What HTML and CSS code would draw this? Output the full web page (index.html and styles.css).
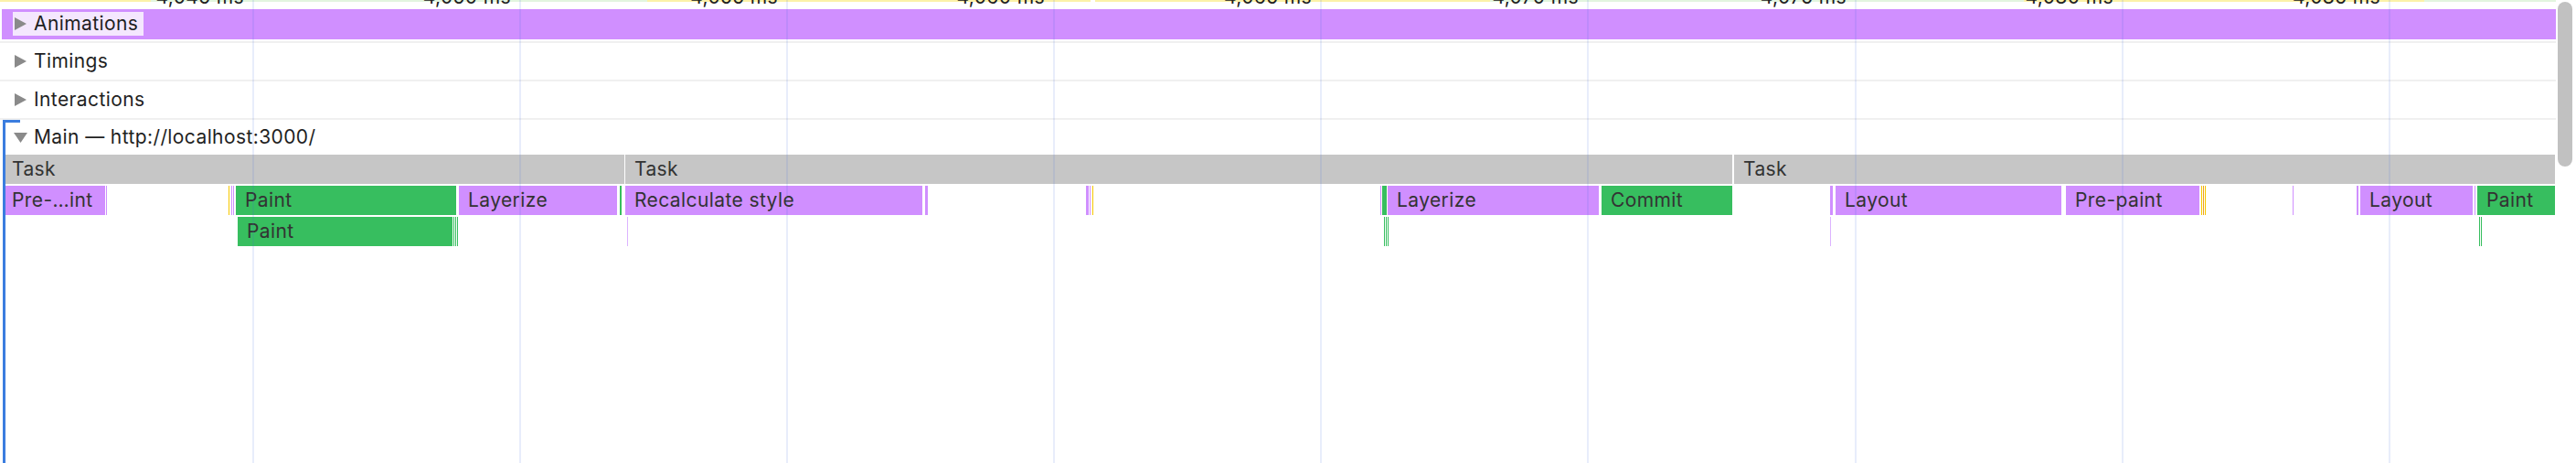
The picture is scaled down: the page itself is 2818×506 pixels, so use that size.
FILE: index.html
```html
<!DOCTYPE html>
<html lang="en">
<head>
<meta charset="utf-8">
<title>Performance timeline</title>
<link rel="stylesheet" href="styles.css">
</head>
<body>
<div class="timeline">
  <div class="frames">
    <div class="frame-line">
      <span class="fl fy" style="width:165px"></span>
      <span class="fl fg" style="width:543px"></span>
      <span class="fl fy" style="width:485px"></span>
      <span class="fl fw" style="width:5px"></span>
      <span class="fl fy" style="width:432px"></span>
      <span class="fl fg" style="width:584px"></span>
      <span class="fl fy" style="width:438px"></span>
      <span class="fl fg" style="width:144px"></span>
    </div>
    <span class="tick" style="left:267px">4,045 ms</span>
    <span class="tick" style="left:559px">4,050 ms</span>
    <span class="tick" style="left:851px">4,055 ms</span>
    <span class="tick" style="left:1143px">4,060 ms</span>
    <span class="tick" style="left:1435px">4,065 ms</span>
    <span class="tick" style="left:1727px">4,070 ms</span>
    <span class="tick" style="left:2020px">4,075 ms</span>
    <span class="tick" style="left:2312px">4,080 ms</span>
    <span class="tick" style="left:2604px">4,085 ms</span>
  </div>

  <div class="track anim">
    <div class="anim-bar">
      <div class="label anim-label">
        <svg class="tri-right" viewBox="0 0 13 14"><polygon points="0,0 13,7 0,14"/></svg>
        <span class="label-text">Animations</span>
      </div>
    </div>
  </div>
  <div class="sep"></div>

  <div class="track plain">
    <div class="label">
      <svg class="tri-right" viewBox="0 0 13 14"><polygon points="0,0 13,7 0,14"/></svg>
      <span class="label-text">Timings</span>
    </div>
  </div>
  <div class="sep"></div>

  <div class="track plain">
    <div class="label">
      <svg class="tri-right" viewBox="0 0 13 14"><polygon points="0,0 13,7 0,14"/></svg>
      <span class="label-text">Interactions</span>
    </div>
  </div>
  <div class="sep"></div>

  <div class="track main">
    <div class="bracket"></div>
    <div class="main-head">
      <svg class="tri-down" viewBox="0 0 15 11"><polygon points="0,0 15,0 7.5,11"/></svg>
      <span class="label-text">Main — http://localhost:3000/</span>
    </div>
    <div class="flame">
      <div class="frow">
        <div class="ev task" style="left:6px;width:677px"><span class="ev-text first">Task</span></div>
        <div class="ev task" style="left:684px;width:1211px"><span class="ev-text">Task</span></div>
        <div class="ev task" style="left:1897px;width:898px"><span class="ev-text">Task</span></div>
      </div>
      <div class="frow">
        <div class="ev p" style="left:6px;width:109px"><span class="ev-text first">Pre-…int</span></div>
        <div class="ev p" style="left:116px;width:1px"></div>
        <div class="ev y" style="left:250px;width:1px"></div>
        <div class="ev p" style="left:253px;width:1px"></div>
        <div class="ev p" style="left:255px;width:1px"></div>
        <div class="ev g" style="left:258px;width:241px"><span class="ev-text">Paint</span></div>
        <div class="ev p" style="left:502px;width:173px"><span class="ev-text">Layerize</span></div>
        <div class="ev g" style="left:678px;width:2px"></div>
        <div class="ev p" style="left:684px;width:325px"><span class="ev-text">Recalculate style</span></div>
        <div class="ev p" style="left:1012px;width:3px"></div>
        <div class="ev p" style="left:1188px;width:3px"></div>
        <div class="ev p" style="left:1192px;width:1px"></div>
        <div class="ev y" style="left:1195px;width:1px"></div>
        <div class="ev p" style="left:1510px;width:1px"></div>
        <div class="ev g" style="left:1512px;width:5px"></div>
        <div class="ev p" style="left:1518px;width:231px"><span class="ev-text">Layerize</span></div>
        <div class="ev g" style="left:1752px;width:143px"><span class="ev-text">Commit</span></div>
        <div class="ev p" style="left:2002px;width:3px"></div>
        <div class="ev p" style="left:2008px;width:247px"><span class="ev-text">Layout</span></div>
        <div class="ev p" style="left:2260px;width:146px"><span class="ev-text">Pre-paint</span></div>
        <div class="ev y" style="left:2408px;width:1px"></div>
        <div class="ev o" style="left:2410px;width:1px"></div>
        <div class="ev y" style="left:2412px;width:1px"></div>
        <div class="ev p" style="left:2508px;width:1px"></div>
        <div class="ev p" style="left:2578px;width:2px"></div>
        <div class="ev p" style="left:2582px;width:123px"><span class="ev-text">Layout</span></div>
        <div class="ev p" style="left:2707px;width:1px"></div>
        <div class="ev g" style="left:2710px;width:85px"><span class="ev-text">Paint</span></div>
      </div>
      <div class="frow">
        <div class="ev g" style="left:260px;width:235px"><span class="ev-text">Paint</span></div>
        <div class="ev g" style="left:496px;width:1px"></div>
        <div class="ev g" style="left:498px;width:1px"></div>
        <div class="ev g" style="left:500px;width:1px"></div>
        <div class="ev lp" style="left:686px;width:1px"></div>
        <div class="ev g" style="left:1514px;width:1px"></div>
        <div class="ev g" style="left:1516px;width:1px"></div>
        <div class="ev g" style="left:1518px;width:1px"></div>
        <div class="ev lp" style="left:2002px;width:1px"></div>
        <div class="ev g" style="left:2712px;width:1px"></div>
        <div class="ev g" style="left:2714px;width:1px"></div>
      </div>
    </div>
  </div>

  <div class="grid">
    <span class="gl" style="left:276px"></span>
    <span class="gl" style="left:568px"></span>
    <span class="gl" style="left:860px"></span>
    <span class="gl" style="left:1152px"></span>
    <span class="gl" style="left:1444px"></span>
    <span class="gl" style="left:1736px"></span>
    <span class="gl" style="left:2029px"></span>
    <span class="gl" style="left:2321px"></span>
    <span class="gl" style="left:2613px"></span>
  </div>

  <div class="scrollbar"></div>
</div>
</body>
</html>
```

FILE: styles.css
```css
* { box-sizing: border-box; }

html, body {
  margin: 0;
  padding: 0;
  background: #ffffff;
}

body {
  width: 2818px;
  height: 506px;
  overflow: hidden;
  font-family: Inter, "Liberation Sans", sans-serif;
  font-size: 21px;
  letter-spacing: 0.4px;
  color: #1f1f1f;
}

.timeline {
  position: relative;
  width: 2818px;
  height: 506px;
  overflow: hidden;
}

/* top frames strip + ruler labels (mostly scrolled away) */
.frames {
  position: relative;
  height: 10px;
  width: 2796px;
  overflow: hidden;
}

.frame-line {
  display: flex;
  height: 2px;
}

.fl { height: 2px; flex: none; }
.fy { background: #fbf1a8; }
.fg { background: #e2f5df; }
.fw { background: #ffffff; }

.tick {
  position: absolute;
  top: -14px;
  line-height: 21px;
  transform: translateX(-100%);
  color: #202020;
  white-space: nowrap;
}

/* tracks */
.track {
  width: 2796px;
}

.anim {
  height: 35px;
  padding-left: 2px;
}

.anim-bar {
  height: 33px;
  background: #d08fff;
  display: flex;
  align-items: flex-start;
}

.label {
  display: flex;
  align-items: center;
  height: 100%;
  padding-left: 16px;
}

.anim-label {
  height: 26px;
  margin-top: 3px;
  margin-left: 12px;
  padding-left: 2px;
  padding-right: 6px;
  background: #f4e7fe;
}

.plain {
  height: 40px;
}

.tri-right {
  width: 13px;
  height: 14px;
  margin-right: 8px;
  fill: #8a8a8a;
  flex: none;
}

.tri-down {
  width: 15px;
  height: 11px;
  margin-right: 7px;
  fill: #8a8a8a;
  flex: none;
}

.label-text {
  white-space: nowrap;
  line-height: 26px;
}

.sep {
  height: 2px;
  width: 2796px;
  background: #f0f0f0;
}

/* main thread */
.main {
  position: relative;
  height: 375px;
}

.bracket {
  position: absolute;
  left: 3px;
  top: 0;
  bottom: 0;
  width: 3px;
  background: #3b7ddf;
}

.bracket::after {
  content: "";
  position: absolute;
  left: 0;
  top: 0;
  width: 19px;
  height: 3px;
  background: #3b7ddf;
}

.main-head {
  height: 38px;
  display: flex;
  align-items: center;
  padding-left: 15px;
}

.flame {
  display: flex;
  flex-direction: column;
  gap: 2px;
}

.frow {
  position: relative;
  height: 32px;
}

.ev {
  position: absolute;
  top: 0;
  height: 32px;
  overflow: hidden;
}

.ev-text {
  display: block;
  padding-left: 10px;
  line-height: 32px;
  color: #333333;
  white-space: nowrap;
}

.ev-text.first { padding-left: 7px; }

.task { background: #c6c6c6; }
.p { background: #d08fff; }
.lp { background: #dcb3ff; }
.g { background: #37be5f; }
.y { background: #f6c800; }
.o { background: #f0a020; }

/* vertical time grid overlay */
.grid {
  position: absolute;
  left: 0;
  top: 0;
  width: 2796px;
  height: 506px;
  pointer-events: none;
}

.gl {
  position: absolute;
  top: 0;
  width: 2px;
  height: 506px;
  background: rgba(64, 110, 220, 0.12);
}

.scrollbar {
  position: absolute;
  left: 2798px;
  top: 2px;
  width: 16px;
  height: 180px;
  border-radius: 8px;
  background: #c1c1c1;
}
```
